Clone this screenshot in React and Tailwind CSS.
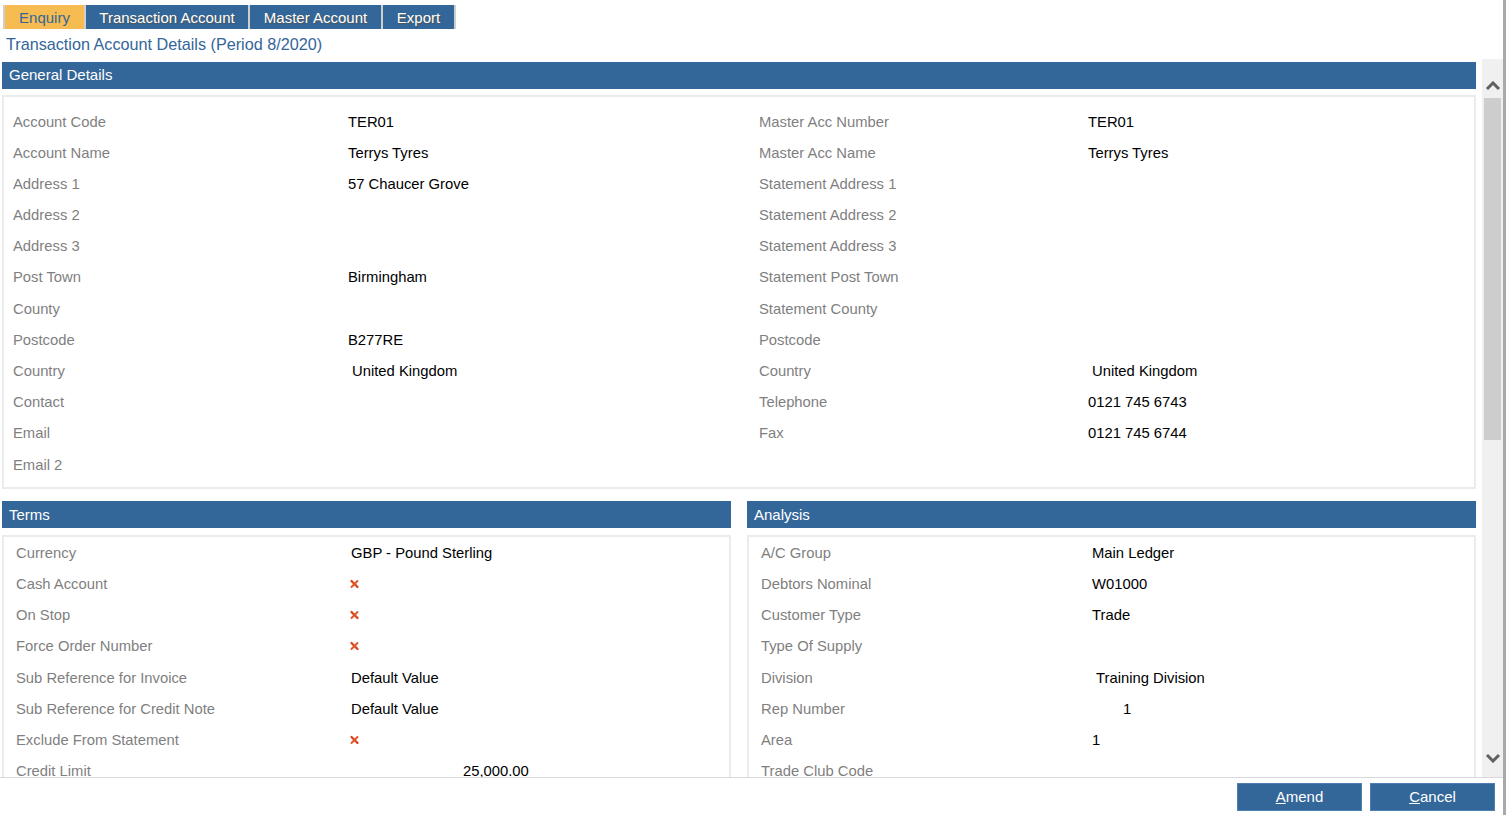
import React from 'react';

const general = [
  ['Account Code', 'TER01', 'Master Acc Number', 'TER01'],
  ['Account Name', 'Terrys Tyres', 'Master Acc Name', 'Terrys Tyres'],
  ['Address 1', '57 Chaucer Grove', 'Statement Address 1', ''],
  ['Address 2', '', 'Statement Address 2', ''],
  ['Address 3', '', 'Statement Address 3', ''],
  ['Post Town', 'Birmingham', 'Statement Post Town', ''],
  ['County', '', 'Statement County', ''],
  ['Postcode', 'B277RE', 'Postcode', ''],
  ['Country', ' United Kingdom', 'Country', ' United Kingdom'],
  ['Contact', '', 'Telephone', '0121 745 6743'],
  ['Email', '', 'Fax', '0121 745 6744'],
  ['Email 2', '', '', ''],
];

const Cross = () => (
  <svg width="11" height="10" viewBox="0 0 11 10" className="ml-[-2px]">
    <path d="M2.5 2 L8.5 8" stroke="#d9481d" strokeWidth="2.4" strokeLinecap="round" />
    <path d="M8.5 2 L2.5 8" stroke="#e0562a" strokeWidth="1.9" strokeLinecap="round" />
  </svg>
);

const terms = [
  ['Currency', 'GBP - Pound Sterling'],
  ['Cash Account', 'x'],
  ['On Stop', 'x'],
  ['Force Order Number', 'x'],
  ['Sub Reference for Invoice', 'Default Value'],
  ['Sub Reference for Credit Note', 'Default Value'],
  ['Exclude From Statement', 'x'],
  ['Credit Limit', '25,000.00', 'pl-[112px]'],
];

const analysis = [
  ['A/C Group', 'Main Ledger'],
  ['Debtors Nominal', 'W01000'],
  ['Customer Type', 'Trade'],
  ['Type Of Supply', ''],
  ['Division', 'Training Division', 'pl-[4px]'],
  ['Rep Number', '1', 'pl-[31px]'],
  ['Area', '1'],
  ['Trade Club Code', ''],
];

const Header = ({ children }) => (
  <div className="h-[27px] bg-[#336699] text-white text-[15px] pl-[7px] flex items-center">{children}</div>
);

const Value = ({ v, cls = '' }) => (
  <div className={`text-black ${cls}`}>
    {v === 'x' ? <Cross /> : v.startsWith(' ') ? <span className="pl-[4px]">{v.trim()}</span> : v}
  </div>
);

const tabs = ['Transaction Account', 'Master Account', 'Export'];

export default function App() {
  return (
    <div className="w-[1506px] h-[815px] flex flex-col bg-white border-r-[3px] border-[#a9a9a9] font-['Liberation_Sans',sans-serif] text-[14.8px] overflow-hidden">
      {/* tabs */}
      <div className="pt-[5px] pl-[3px] flex">
        <div className="flex gap-[2px] bg-[#cfcfcf] px-[2px] h-[24px]">
          <div className="w-[79px] bg-[#f6bc52] text-[#336699] text-[15px] flex items-center justify-center pt-[2px]">Enquiry</div>
          {tabs.map((t, i) => (
            <div
              key={t}
              className={`${['w-[162px]', 'w-[131px]', 'w-[71px]'][i]} bg-[#336699] text-white text-[15px] flex items-center justify-center pt-[2px] [text-shadow:1px_1px_1px_#555]`}
            >
              {t}
            </div>
          ))}
        </div>
      </div>
      <div className="h-[26px] pl-[6px] pt-[4px] text-[16.2px] text-[#336699] flex items-center">
        Transaction Account Details (Period 8/2020)
      </div>

      {/* main */}
      <div className="flex flex-1 min-h-0 border-b border-[#d9d9d9]">
        <div className="flex-1 overflow-hidden pl-[2px] pr-[6px] pt-[7px]">
          <Header>General Details</Header>
          <div className="mt-[6px] border-2 border-[#ebebeb] pt-[9px] pb-[7px] pl-[9px]">
            {general.map((r, i) => (
              <div key={i} className="h-[31.2px] grid grid-cols-[335px_411px_329px_1fr] items-center">
                <div className="text-[#7f7f7f]">{r[0]}</div>
                <Value v={r[1]} />
                <div className="text-[#7f7f7f]">{r[2]}</div>
                <Value v={r[3]} />
              </div>
            ))}
          </div>

          <div className="mt-[12px] grid grid-cols-2 gap-4">
            <div>
              <Header>Terms</Header>
              <div className="mt-[7px] border-2 border-[#ebebeb] pl-[12px] h-[300px]">
                {terms.map((r, i) => (
                  <div key={i} className="h-[31.2px] grid grid-cols-[335px_1fr] items-center">
                    <div className="text-[#7f7f7f]">{r[0]}</div>
                    <Value v={r[1]} cls={r[2] || ''} />
                  </div>
                ))}
              </div>
            </div>
            <div>
              <Header>Analysis</Header>
              <div className="mt-[7px] border-2 border-[#ebebeb] pl-[12px] h-[300px]">
                {analysis.map((r, i) => (
                  <div key={i} className="h-[31.2px] grid grid-cols-[331px_1fr] items-center">
                    <div className="text-[#7f7f7f]">{r[0]}</div>
                    <Value v={r[1]} cls={r[2] || ''} />
                  </div>
                ))}
              </div>
            </div>
          </div>
        </div>

        {/* scrollbar */}
        <div className="w-[21px] mt-[4px] bg-[#f0f0f0] flex flex-col items-center">
          <svg width="16" height="10" viewBox="0 0 16 10" className="mt-[22px]">
            <path d="M2 8 L8 2 L14 8" fill="none" stroke="#606060" strokeWidth="3" />
          </svg>
          <div className="mt-[7px] w-[17px] h-[342px] bg-[#cdcdcd]" />
          <div className="flex-1" />
          <svg width="16" height="10" viewBox="0 0 16 10" className="mb-[14px]">
            <path d="M2 2 L8 8 L14 2" fill="none" stroke="#606060" strokeWidth="3" />
          </svg>
        </div>
      </div>

      {/* footer */}
      <div className="h-[37px] flex items-start justify-end gap-[8px] pr-[8px] pt-[5px]">
        {['Amend', 'Cancel'].map((b) => (
          <button key={b} className="w-[125px] h-[28px] bg-[#336699] border border-[#4d7fb0] text-white text-[15px]">
            <span className="underline">{b[0]}</span>
            {b.slice(1)}
          </button>
        ))}
      </div>
    </div>
  );
}
